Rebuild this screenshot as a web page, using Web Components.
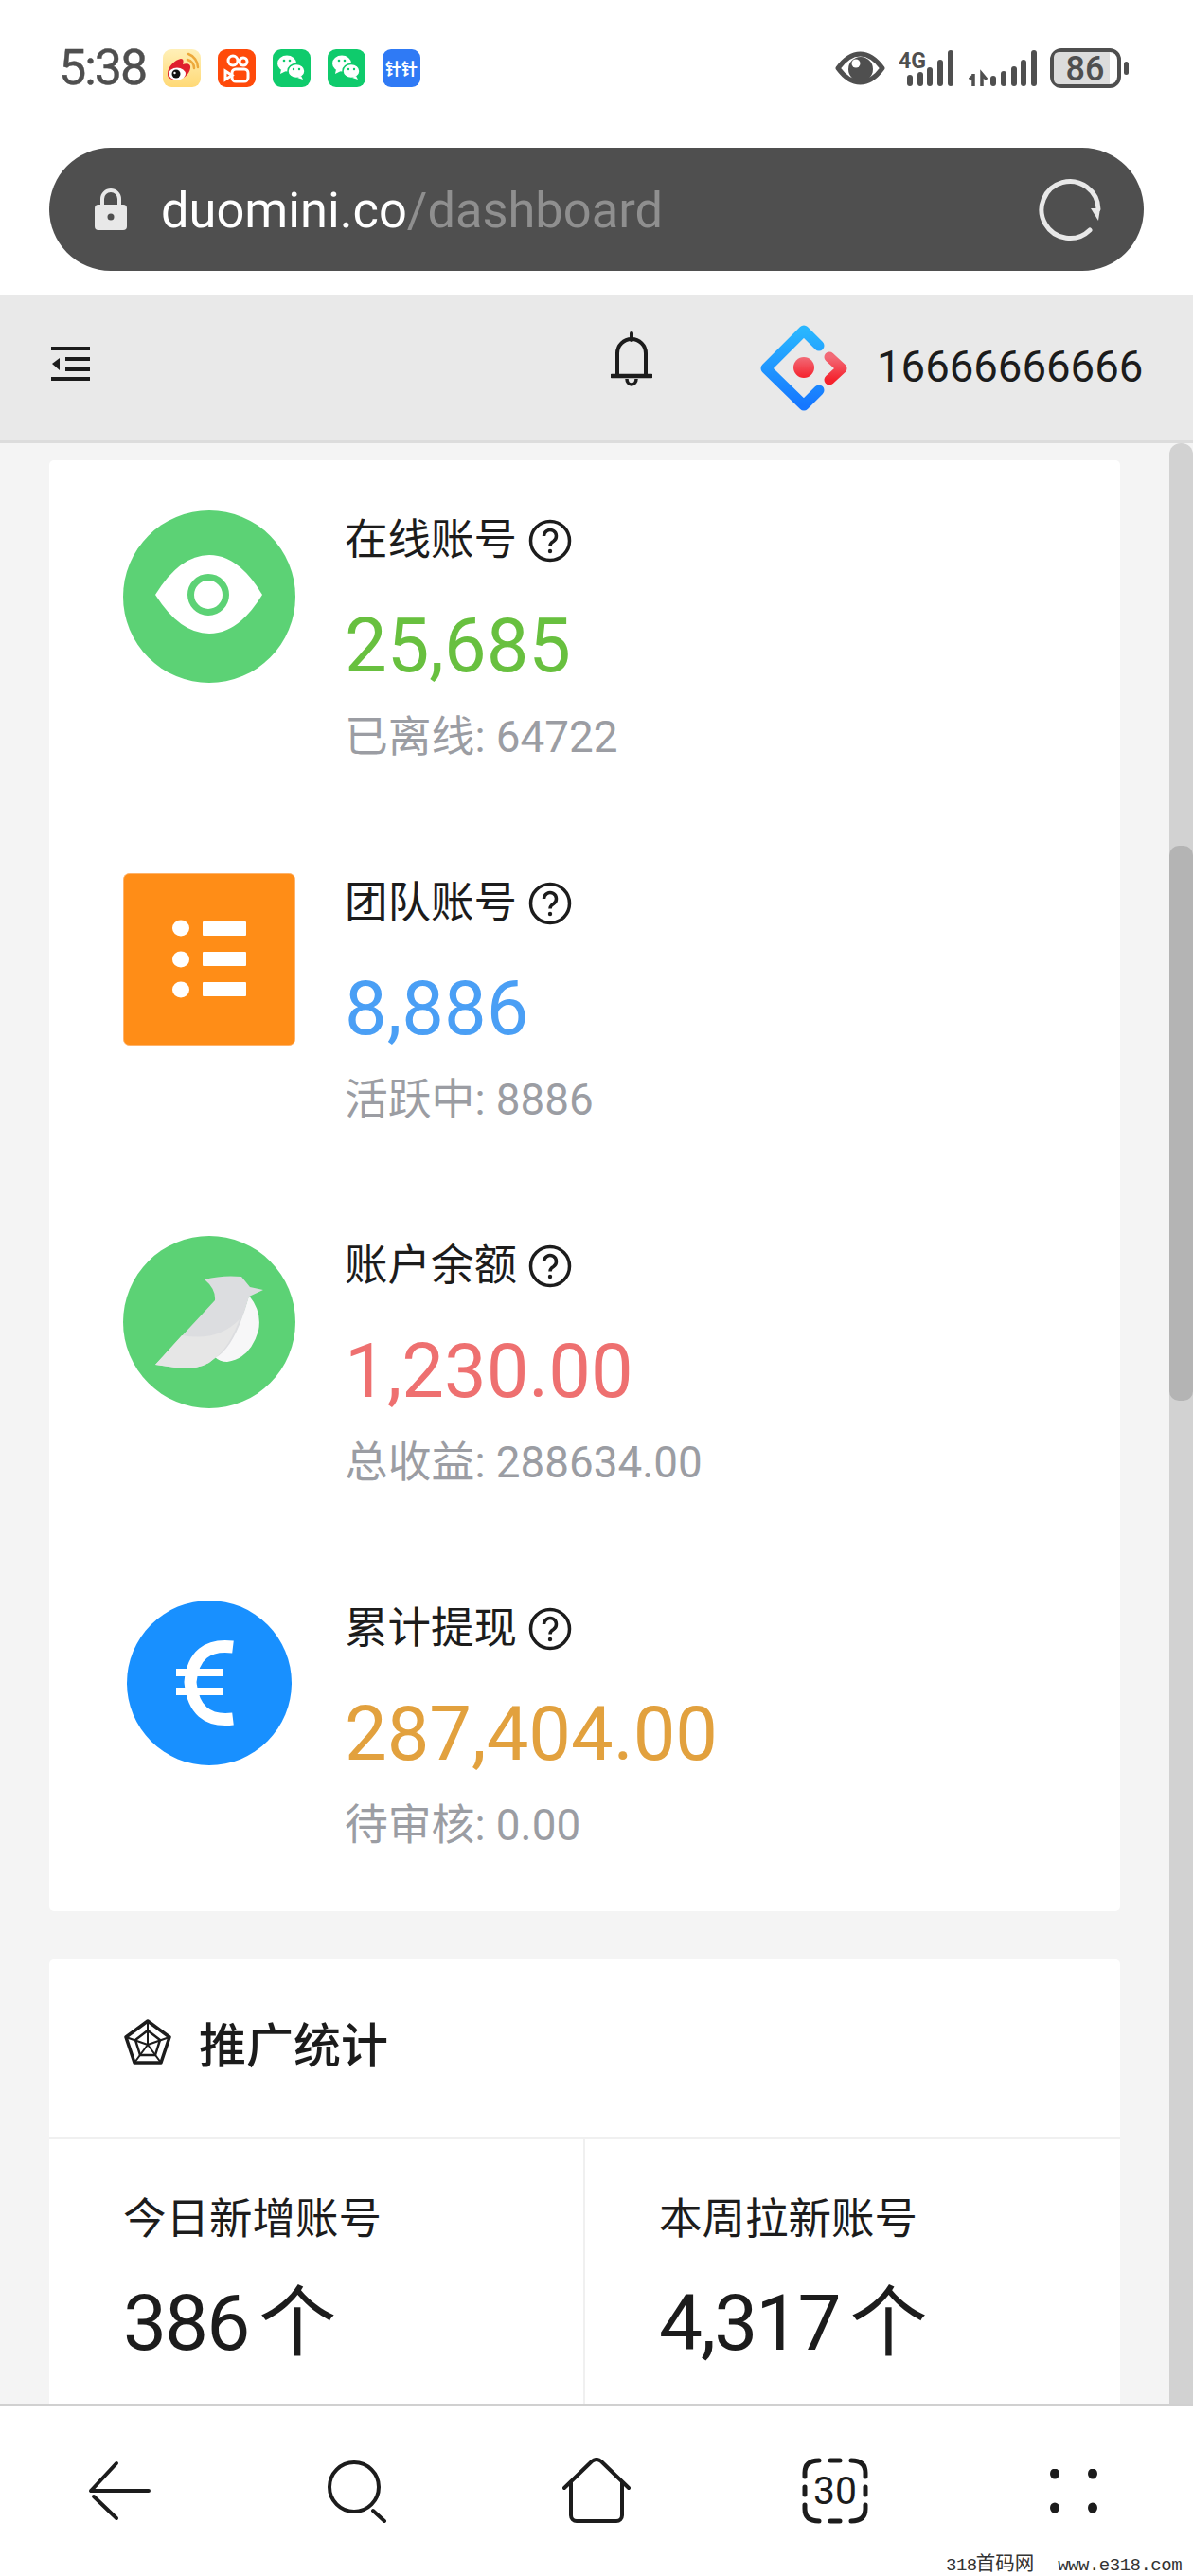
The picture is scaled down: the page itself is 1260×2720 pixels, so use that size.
<!DOCTYPE html>
<html lang="zh">
<head>
<meta charset="utf-8">
<title>duomini dashboard</title>
<style>
  html, body {
    margin: 0;
    height: 2720px;
    overflow: hidden;
    background: #fff;
    font-family: Roboto, "Noto Sans CJK SC", sans-serif;
  }
  app-shell svg {
    display: block;
  }
</style>
</head>
<body>
<app-shell>
  <status-bar slot="status"></status-bar>
  <url-bar slot="url"></url-bar>
  <page-header slot="header"></page-header>

  <stat-card>
    <stat-row data-title="在线账号" data-value="25,685" data-label="已离线:" data-count="64722" data-color="#68c03f">
      <svg width="182" height="182" viewBox="0 0 182 182">
        <circle cx="91" cy="91" r="91" fill="#5cd275"/>
        <path d="M34 89Q60 47 91 47T147 89Q122 130 91 130T34 89Z" fill="#fff"/>
        <circle cx="90" cy="89" r="18.5" fill="none" stroke="#5cd275" stroke-width="7"/>
      </svg>
    </stat-row>
    <stat-row data-title="团队账号" data-value="8,886" data-label="活跃中:" data-count="8886" data-color="#4a9ff5">
      <svg width="182" height="182" viewBox="0 0 182 182">
        <rect x="0.5" y="0.5" width="181" height="181" rx="6" fill="#ff8d17" stroke="#ffb36a"/>
        <ellipse cx="61" cy="58" rx="9" ry="8.5" fill="#fff"/>
        <ellipse cx="61" cy="91" rx="9" ry="8.5" fill="#fff"/>
        <ellipse cx="61" cy="123" rx="9" ry="8.5" fill="#fff"/>
        <rect x="84" y="51" width="46" height="15" rx="1" fill="#fff"/>
        <rect x="84" y="83" width="46" height="15" rx="1" fill="#fff"/>
        <rect x="84" y="115" width="46" height="15" rx="1" fill="#fff"/>
      </svg>
    </stat-row>
    <stat-row data-title="账户余额" data-value="1,230.00" data-label="总收益:" data-count="288634.00" data-color="#ee7070">
      <svg width="182" height="182" viewBox="0 0 182 182">
        <circle cx="91" cy="91" r="91" fill="#5cd275"/>
        <path d="M133 63Q147 80 143 100Q134 130 110 133Q102 133 97 128Q118 115 133 63Z" fill="#f7f7f8"/>
        <path d="M34 136L97 68Q98 56 86 46Q105 41 125 43L134 54L148 57L133 64Q118 118 97 129Q85 141 62 140Z" fill="#dcdde0"/>
        <path d="M34 136L62 105Q100 112 123 88Q112 118 97 129Q85 141 62 140Z" fill="#e6e6e6"/>
      </svg>
    </stat-row>
    <stat-row data-title="累计提现" data-value="287,404.00" data-label="待审核:" data-count="0.00" data-color="#e2a13e">
      <svg width="182" height="182" viewBox="0 0 182 182">
        <ellipse cx="91" cy="89" rx="87" ry="87" fill="#1890ff"/>
        <path d="M116 51Q75 46 71 88Q75 132 116 127" fill="none" stroke="#fff" stroke-width="13"/>
        <path d="M56 78H105M56 98H105" fill="none" stroke="#fff" stroke-width="8"/>
      </svg>
    </stat-row>
  </stat-card>

  <promo-card>
    <promo-cell data-title="今日新增账号" data-value="386"></promo-cell>
    <promo-cell data-title="本周拉新账号" data-value="4,317"></promo-cell>
  </promo-card>

  <bottom-nav slot="nav"></bottom-nav>
</app-shell>

<script>
class AppShell extends HTMLElement
{
  constructor()
  {
    super();
    this.attachShadow({mode: "open"});
    this.shadowRoot.innerHTML = `
      <style>
        :host {
          display: flex;
          flex-direction: column;
          width: 1260px;
          height: 2720px;
          overflow: hidden;
        }
        .main {
          flex: 1;
          min-height: 0;
          display: flex;
          background: #f4f4f4;
        }
        .content {
          flex: 1;
          min-width: 0;
          padding: 18px 52px 0;
          display: flex;
          flex-direction: column;
          gap: 51px;
          overflow: hidden;
        }
        .rail {
          width: 25px;
          flex: none;
          background: #d2d2d2;
          border-radius: 12px 12px 0 0;
          padding-top: 425px;
          box-sizing: border-box;
        }
        .thumb {
          height: 586px;
          background: #b4b4b4;
          border-radius: 10px;
        }
      </style>
      <slot name="status"></slot>
      <slot name="url"></slot>
      <slot name="header"></slot>
      <div class="main">
        <div class="content"><slot></slot></div>
        <div class="rail"><div class="thumb"></div></div>
      </div>
      <slot name="nav"></slot>
    `;
  }
}

class StatusBar extends HTMLElement
{
  constructor()
  {
    super();
    this.attachShadow({mode: "open"});
    const bubble = (dark) => `
      <rect width="40" height="40" rx="9" fill="${dark}"/>
      <ellipse cx="15" cy="15" rx="10" ry="8.5" fill="#fff"/>
      <path d="M9 21l-1 5 6-3z" fill="#fff"/>
      <ellipse cx="25" cy="23" rx="9" ry="7.5" fill="#fff" stroke="${dark}" stroke-width="1.5"/>
      <path d="M30 28l2 4-6-2z" fill="#fff"/>
      <circle cx="12" cy="12" r="1.3" fill="${dark}"/><circle cx="18" cy="12" r="1.3" fill="${dark}"/>
      <circle cx="22" cy="21" r="1.2" fill="${dark}"/><circle cx="28" cy="21" r="1.2" fill="${dark}"/>`;
    const bars = (list) => list.map(([x, y]) =>
      `<rect x="${x - 3}" y="${y}" width="6" height="${39 - y}" rx="3" fill="#4f4f4f"/>`).join("");
    this.shadowRoot.innerHTML = `
      <style>
        :host {
          display: flex;
          align-items: center;
          justify-content: space-between;
          height: 144px;
          padding: 0 68px 12px 62px;
          color: #4f4f4f;
          font-family: Roboto, sans-serif;
        }
        .left, .right {
          display: flex;
          align-items: center;
        }
        .time {
          font-size: 52px;
          letter-spacing: -2px;
          line-height: 60px;
          width: 110px;
          -webkit-text-stroke: 0.4px #4f4f4f;
        }
        .apps {
          display: flex;
          gap: 18px;
        }
        svg {
          display: block;
        }
        .right {
          gap: 14px;
        }
      </style>
      <div class="left">
        <span class="time">5:38</span>
        <div class="apps">
          <svg width="40" height="40" viewBox="0 0 40 40">
            <defs><linearGradient id="wb" x1="0" y1="0" x2="0" y2="1"><stop offset="0" stop-color="#fff0b8"/><stop offset="1" stop-color="#ffd976"/></linearGradient></defs>
            <rect width="40" height="40" rx="9" fill="url(#wb)"/>
            <path d="M5 26c0-8 8-15 14-16 3 0 3 3 2 6 5-2 9 0 8 4-1 7-8 12-15 12S5 30 5 26z" fill="#df1f2d"/>
            <ellipse cx="15" cy="26" rx="9" ry="6.5" fill="#fff"/>
            <circle cx="14" cy="26" r="4.5" fill="#111"/>
            <circle cx="12.5" cy="25" r="1.2" fill="#fff"/>
            <path d="M26 11a9 9 0 0 1 7 9M27 5a15 15 0 0 1 10 14" fill="none" stroke="#eda93b" stroke-width="2.5" stroke-linecap="round"/>
          </svg>
          <svg width="40" height="40" viewBox="0 0 40 40">
            <rect width="40" height="40" rx="9" fill="#ff4a0a"/>
            <g fill="none" stroke="#fff" stroke-width="3">
              <circle cx="16" cy="12" r="5"/>
              <circle cx="27" cy="13" r="4"/>
              <rect x="15" y="21" width="17" height="13" rx="4"/>
              <path d="M15 27.5L8 23v9z"/>
            </g>
          </svg>
          <svg width="40" height="40" viewBox="0 0 40 40">${bubble("#0fcb6c")}</svg>
          <svg width="40" height="40" viewBox="0 0 40 40">${bubble("#0fcb6c")}</svg>
          <svg width="40" height="40" viewBox="0 0 40 40">
            <rect width="40" height="40" rx="9" fill="#2f7af5"/>
            <text x="20" y="26.5" text-anchor="middle" font-size="17" font-weight="700" fill="#fff" font-family="'Noto Sans CJK SC', sans-serif">针针</text>
          </svg>
        </div>
      </div>
      <div class="right">
        <svg width="53" height="38" viewBox="0 0 53 38">
          <path d="M3 19Q14 4 26.500 4T50 19Q39 34 26.500 34T3 19Z" fill="none" stroke="#4f4f4f" stroke-width="5" stroke-linejoin="round"/>
          <circle cx="27" cy="20" r="13" fill="#4f4f4f"/>
          <circle cx="22" cy="14" r="4.500" fill="#fff"/>
        </svg>
        <svg width="60" height="40" viewBox="949 52 60 40">
          <g transform="translate(949 52)">
            <text x="0" y="20" font-size="23" font-weight="700" fill="#4f4f4f" font-family="Roboto, sans-serif" textLength="29" lengthAdjust="spacingAndGlyphs">4G</text>
            ${bars([[12, 27], [23, 24], [33, 19], [44, 11], [55, 1]])}
          </g>
        </svg>
        <svg width="72" height="40" viewBox="0 0 72 40">
          <path d="M5 28l-4 4M5 26v13M14 39V26l5 6" fill="none" stroke="#4f4f4f" stroke-width="3.500"/>
          ${bars([[26, 28], [37, 23], [48, 18], [58, 11], [69, 1]])}
        </svg>
        <svg width="83" height="42" viewBox="0 0 83 42">
          <rect x="2" y="2" width="71" height="38" rx="10" fill="#fff" stroke="#4f4f4f" stroke-width="4"/>
          <path d="M10 4H63V38H10Q4 38 4 32V10Q4 4 10 4Z" fill="#dcdcdc"/>
          <rect x="78" y="14" width="5" height="14" rx="2.500" fill="#4f4f4f"/>
          <text x="37" y="34" text-anchor="middle" font-size="36" font-weight="500" fill="#4f4f4f" font-family="Roboto, sans-serif">86</text>
        </svg>
      </div>
    `;
  }
}

class UrlBar extends HTMLElement
{
  constructor()
  {
    super();
    this.attachShadow({mode: "open"});
    this.shadowRoot.innerHTML = `
      <style>
        :host {
          display: block;
          padding: 0 52px 26px;
          background: #fff;
        }
        .bar {
          height: 130px;
          border-radius: 65px;
          background: #4f4f4f;
          display: flex;
          align-items: center;
          padding: 0 44px 0 48px;
          box-sizing: border-box;
        }
        .lock {
          margin-right: 36px;
          flex: none;
        }
        .text {
          flex: 1;
          color: #fff;
          font: 52.400px/60px Roboto, sans-serif;
          padding-top: 2px;
        }
        .text span {
          color: #8f8f8f;
        }
        svg {
          display: block;
        }
      </style>
      <div class="bar">
        <svg class="lock" width="34" height="44" viewBox="0 0 34 44">
          <path d="M8 20V11a9 9 0 0 1 18 0v9" fill="none" stroke="#e8e8e8" stroke-width="4"/>
          <rect x="0" y="17" width="34" height="27" rx="4" fill="#e8e8e8"/>
          <circle cx="17" cy="30" r="3.500" fill="#4f4f4f"/>
        </svg>
        <div class="text">duomini.co<span>/dashboard</span></div>
        <svg width="68" height="68" viewBox="0 0 68 68">
          <path d="M55 56A30 30 0 1 1 64 34" fill="none" stroke="#e8e8e8" stroke-width="5" stroke-linecap="round"/>
          <path d="M56 33L66 33L64 46Z" fill="#e8e8e8"/>
        </svg>
      </div>
    `;
  }
}

class PageHeader extends HTMLElement
{
  constructor()
  {
    super();
    this.attachShadow({mode: "open"});
    this.shadowRoot.innerHTML = `
      <style>
        :host {
          display: flex;
          align-items: center;
          height: 153px;
          border-bottom: 3px solid #dcdcdc;
          background: #e9e9e9;
          padding: 0 52px 0 52px;
          color: #1c1c1c;
        }
        .menu {
          margin: 0 549px 7px 0;
        }
        .bell {
          margin: 0 114px 17px 0;
        }
        .logo {
          margin-right: 31px;
        }
        .phone {
          font: 45.500px/60px Roboto, sans-serif;
          white-space: nowrap;
          margin-bottom: 2px;
        }
        svg {
          display: block;
          flex: none;
        }
      </style>
      <svg class="menu" width="44" height="38" viewBox="0 0 44 38">
        <path d="M2 2H43M17 13H43M17 24H43M2 34H43" stroke="#1c1c1c" stroke-width="4" fill="none"/>
        <path d="M3 18L11 12V25Z" fill="#1c1c1c"/>
      </svg>
      <svg class="bell" width="44" height="60" viewBox="0 0 44 60">
        <path d="M7 47V23a15 15 0 0 1 30 0V47" fill="none" stroke="#1c1c1c" stroke-width="4"/>
        <path d="M1 47H43" stroke="#1c1c1c" stroke-width="4.500" stroke-linecap="round"/>
        <path d="M22 2V9" stroke="#1c1c1c" stroke-width="4" stroke-linecap="round"/>
        <path d="M17 50a5 6 0 0 0 10 0" fill="none" stroke="#1c1c1c" stroke-width="3.500"/>
      </svg>
      <svg class="logo" width="92" height="92" viewBox="0 0 92 92">
        <defs>
          <linearGradient id="ab" x1="0" y1="0" x2="0" y2="1"><stop offset="0" stop-color="#29b6ff"/><stop offset="1" stop-color="#1677ff"/></linearGradient>
          <linearGradient id="ar" x1="0" y1="0" x2="0" y2="1"><stop offset="0" stop-color="#f26a76"/><stop offset="1" stop-color="#f5222d"/></linearGradient>
        </defs>
        <path d="M62 22L46 6L6 46L46 85L62 69" fill="none" stroke="url(#ab)" stroke-width="11" stroke-linecap="round" stroke-linejoin="round"/>
        <path d="M73 34L86 46L73 58" fill="none" stroke="url(#ar)" stroke-width="11" stroke-linecap="round" stroke-linejoin="round"/>
        <circle cx="46" cy="45" r="11" fill="url(#ar)"/>
      </svg>
      <span class="phone">16666666666</span>
    `;
  }
}

class StatCard extends HTMLElement
{
  constructor()
  {
    super();
    this.attachShadow({mode: "open"});
    this.shadowRoot.innerHTML = `
      <style>
        :host {
          display: flex;
          flex-direction: column;
          gap: 53px;
          flex: none;
          padding: 53px 0 0 78px;
          background: #fff;
          border-radius: 5px;
        }
      </style>
      <slot></slot>
    `;
  }
}

class StatRow extends HTMLElement
{
  constructor()
  {
    super();
    this.attachShadow({mode: "open"});
    const d = this.dataset;
    this.shadowRoot.innerHTML = `
      <style>
        :host {
          display: flex;
          gap: 52px;
          height: 330px;
        }
        .icon {
          width: 182px;
          flex: none;
        }
        .text {
          padding-top: 2px;
          font-family: Roboto, "Noto Sans CJK SC", sans-serif;
        }
        .title {
          display: flex;
          align-items: center;
          gap: 12px;
          color: #1c1c1c;
          font-size: 45.500px;
          line-height: 60px;
        }
        .value {
          margin-top: 36px;
          font-size: 79.500px;
          line-height: 90px;
          color: ${d.color};
        }
        .sub {
          margin-top: 22px;
          font-size: 45.800px;
          line-height: 60px;
          color: #9b9da3;
          white-space: nowrap;
        }
        svg {
          display: block;
        }
      </style>
      <div class="icon"><slot></slot></div>
      <div class="text">
        <div class="title">
          <span>${d.title}</span>
          <svg width="46" height="46" viewBox="0 0 46 46">
            <circle cx="23" cy="23" r="20.500" fill="none" stroke="#1c1c1c" stroke-width="3.500"/>
            <path d="M16.500 18a6.500 6.500 0 1 1 10 5.500q-3.500 2-3.500 5" fill="none" stroke="#1c1c1c" stroke-width="3.500"/>
            <circle cx="23" cy="34" r="2.200" fill="#1c1c1c"/>
          </svg>
        </div>
        <div class="value">${d.value}</div>
        <div class="sub">${d.label} ${d.count}</div>
      </div>
    `;
  }
}

class PromoCard extends HTMLElement
{
  constructor()
  {
    super();
    this.attachShadow({mode: "open"});
    this.shadowRoot.innerHTML = `
      <style>
        :host {
          display: block;
          flex: none;
          background: #fff;
          border-radius: 5px;
          color: #1c1c1c;
        }
        .head {
          display: flex;
          align-items: center;
          gap: 29px;
          height: 173px;
          padding: 0 0 14px 79px;
          border-bottom: 3px solid #f0f0f0;
          font-size: 50px;
          font-weight: 500;
          font-family: "Noto Sans CJK SC", sans-serif;
        }
        .grid {
          display: grid;
          grid-template-columns: 566px 1fr;
          height: 300px;
        }
        svg {
          display: block;
        }
        ::slotted(promo-cell:first-child) {
          border-right: 2px solid #f0f0f0;
        }
      </style>
      <div class="head">
        <svg width="50" height="48" viewBox="0 0 50 48">
          <g fill="none" stroke="#1c1c1c" stroke-linejoin="round">
            <path d="M25 2L48 19L39 46H11L2 19Z" stroke-width="3.500"/>
            <path d="M25 12L38 22L33 38H17L12 22Z" stroke-width="2.500"/>
            <path d="M25 2V27M48 19L25 27M39 46L25 27M11 46L25 27M2 19L25 27" stroke-width="2"/>
          </g>
        </svg>
        <span>推广统计</span>
      </div>
      <div class="grid"><slot></slot></div>
    `;
  }
}

class PromoCell extends HTMLElement
{
  constructor()
  {
    super();
    this.attachShadow({mode: "open"});
    this.shadowRoot.innerHTML = `
      <style>
        :host {
          display: block;
          padding: 55px 0 0 78px;
          font-family: Roboto, "Noto Sans CJK SC", sans-serif;
        }
        .title {
          font-size: 45.500px;
          line-height: 60px;
        }
        .value {
          margin-top: 29px;
          font-size: 82px;
          line-height: 100px;
          letter-spacing: -2px;
          white-space: nowrap;
        }
        .unit {
          margin-left: 11px;
          letter-spacing: 0;
        }
      </style>
      <div class="title">${this.dataset.title}</div>
      <div class="value">${this.dataset.value}<span class="unit">个</span></div>
    `;
  }
}

class BottomNav extends HTMLElement
{
  constructor()
  {
    super();
    this.attachShadow({mode: "open"});
    this.shadowRoot.innerHTML = `
      <style>
        :host {
          display: grid;
          grid-template-columns: repeat(5, 252px);
          align-items: center;
          justify-items: center;
          height: 180px;
          flex: none;
          border-top: 2px solid #d0d0d0;
          background: #fff;
          position: relative;
        }
        svg {
          display: block;
        }
        .mark {
          position: absolute;
          left: 999px;
          top: 159px;
          display: flex;
          gap: 25px;
          color: #333;
          font: 19px/20px "Liberation Mono", "Noto Sans CJK SC", monospace;
          white-space: nowrap;
        }
        .mark span {
          letter-spacing: -0.500px;
        }
        .mark b {
          font-weight: 400;
          font-size: 20.500px;
          letter-spacing: 0;
          margin-left: -1px;
        }
      </style>
      <svg width="70" height="64" viewBox="0 0 70 64">
        <path d="M5 32H66M5 32L32 3M8 38L32 61" fill="none" stroke="#1c1c1c" stroke-width="4" stroke-linecap="round"/>
      </svg>
      <svg width="66" height="68" viewBox="0 0 66 68">
        <circle cx="29" cy="30" r="26" fill="none" stroke="#1c1c1c" stroke-width="4"/>
        <path d="M49 55L61 66" fill="none" stroke="#1c1c1c" stroke-width="4" stroke-linecap="round"/>
      </svg>
      <svg width="72" height="70" viewBox="0 0 72 70">
        <path d="M2 32L31 4Q36 0 41 4L70 32" fill="none" stroke="#1c1c1c" stroke-width="4" stroke-linecap="round" stroke-linejoin="round"/>
        <path d="M9 26V61a6 6 0 0 0 6 6H57a6 6 0 0 0 6-6V26" fill="none" stroke="#1c1c1c" stroke-width="4"/>
      </svg>
      <svg width="70" height="70" viewBox="0 0 70 70">
        <g fill="none" stroke="#1c1c1c" stroke-width="5" stroke-linecap="round">
          <path d="M3 20V16Q3 3 18 3M52 3Q67 3 67 16V20M67 50V54Q67 67 52 67M18 67Q3 67 3 54V50"/>
          <path d="M30 3H40M30 67H40M3 31V39M67 31V39"/>
        </g>
        <text x="35" y="49" text-anchor="middle" font-size="40" fill="#1c1c1c" font-family="Roboto, sans-serif" textLength="46" lengthAdjust="spacingAndGlyphs">30</text>
      </svg>
      <svg width="50" height="46" viewBox="0 0 50 46">
        <ellipse cx="5" cy="5" rx="5" ry="5.500" fill="#1c1c1c"/>
        <ellipse cx="45" cy="5" rx="5" ry="5.500" fill="#1c1c1c"/>
        <ellipse cx="5" cy="41" rx="5" ry="5.500" fill="#1c1c1c"/>
        <ellipse cx="45" cy="41" rx="5" ry="5.500" fill="#1c1c1c"/>
      </svg>
      <div class="mark"><span>318<b>首码网</b></span><span>www.e318.com</span></div>
    `;
  }
}

customElements.define("app-shell", AppShell);
customElements.define("status-bar", StatusBar);
customElements.define("url-bar", UrlBar);
customElements.define("page-header", PageHeader);
customElements.define("stat-card", StatCard);
customElements.define("stat-row", StatRow);
customElements.define("promo-card", PromoCard);
customElements.define("promo-cell", PromoCell);
customElements.define("bottom-nav", BottomNav);
</script>
</body>
</html>
